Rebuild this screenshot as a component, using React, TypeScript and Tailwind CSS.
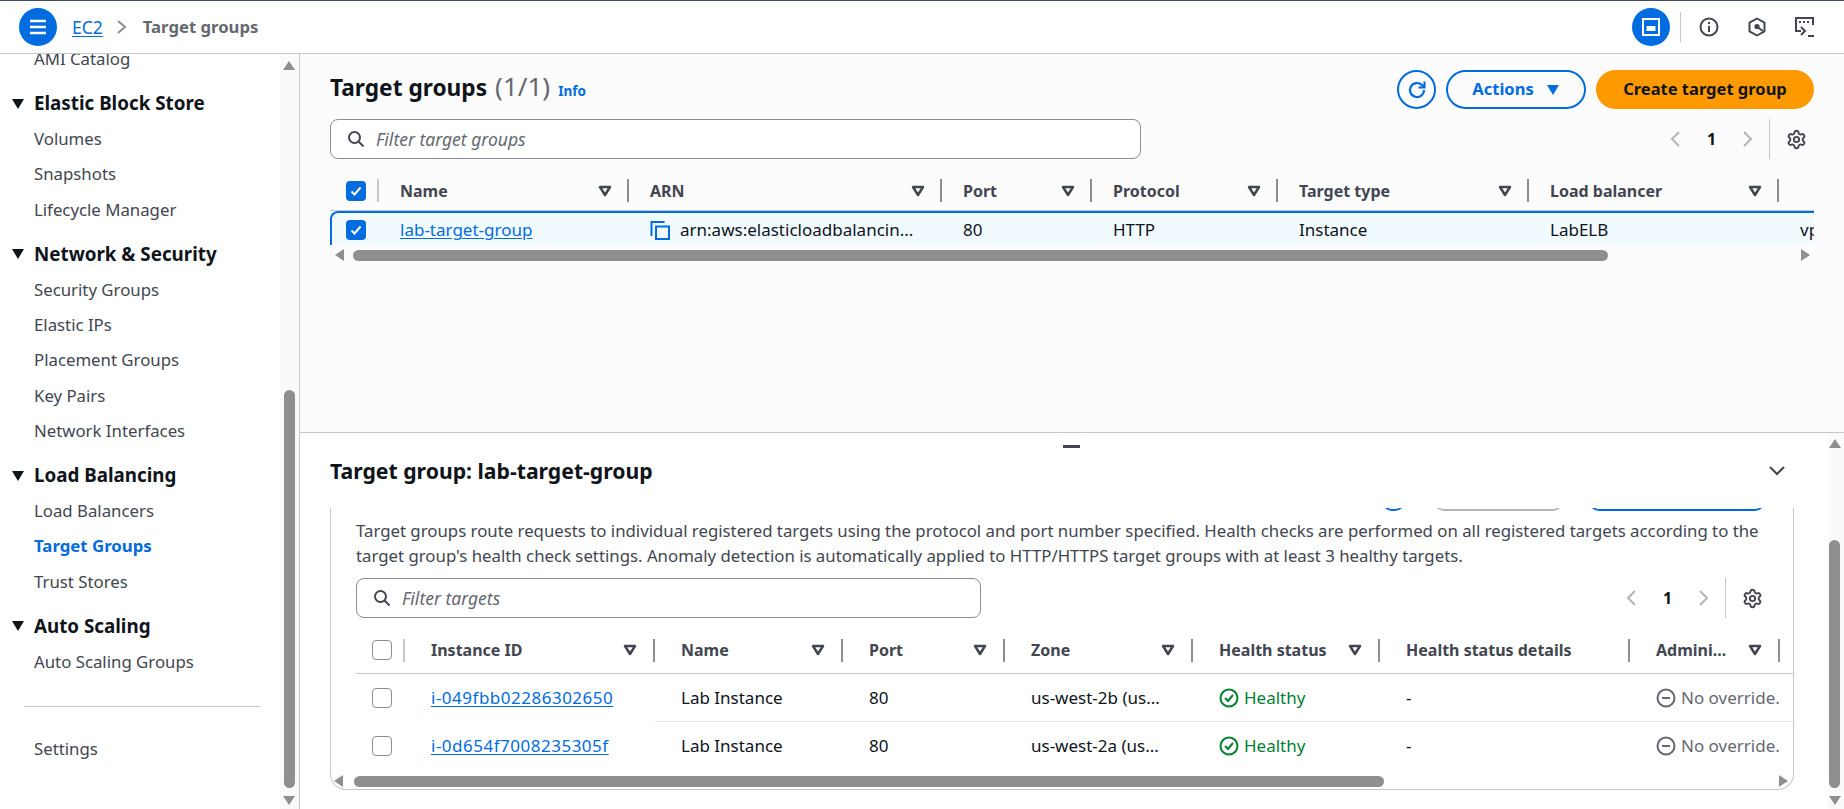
import { Settings } from 'lucide-react';

const font = "font-['Noto_Sans',sans-serif]";

const sections = [
  { title: 'Elastic Block Store', items: ['Volumes', 'Snapshots', 'Lifecycle Manager'] },
  { title: 'Network & Security', items: ['Security Groups', 'Elastic IPs', 'Placement Groups', 'Key Pairs', 'Network Interfaces'] },
  { title: 'Load Balancing', items: ['Load Balancers', 'Target Groups', 'Trust Stores'] },
  { title: 'Auto Scaling', items: ['Auto Scaling Groups'] },
];

const topColumns = [
  { label: 'Name', width: 'w-[250px]' },
  { label: 'ARN', width: 'w-[313px]' },
  { label: 'Port', width: 'w-[150px]' },
  { label: 'Protocol', width: 'w-[186px]' },
  { label: 'Target type', width: 'w-[251px]' },
  { label: 'Load balancer', width: 'w-[250px]' },
];

const targetColumns = [
  { label: 'Instance ID', width: 'w-[250px]', sort: true },
  { label: 'Name', width: 'w-[188px]', sort: true },
  { label: 'Port', width: 'w-[162px]', sort: true },
  { label: 'Zone', width: 'w-[188px]', sort: true },
  { label: 'Health status', width: 'w-[187px]', sort: true },
  { label: 'Health status details', width: 'w-[250px]', sort: false },
  { label: 'Admini...', width: 'w-[150px]', sort: true },
];

const targets = [
  { id: 'i-049fbb02286302650', zone: 'us-west-2b (us...' },
  { id: 'i-0d654f7008235305f', zone: 'us-west-2a (us...' },
];

function SortIcon() {
  return (
    <svg width="14" height="14" viewBox="0 0 14 14" className="shrink-0 text-[#424650]">
      <path d="M2 3h10L7 11z" fill="none" stroke="currentColor" strokeWidth="2.5" strokeLinejoin="round" />
    </svg>
  );
}

function Arrow({ dir, className }: { dir: 'up' | 'down' | 'left' | 'right'; className?: string }) {
  const d = { up: 'M6 1l6 9H0z', down: 'M0 2h12l-6 9z', left: 'M10 0v12L1 6z', right: 'M2 0v12l9-6z' }[dir];
  return (
    <svg width="12" height="12" viewBox="0 0 12 12" className={`shrink-0 ${className ?? ''}`}>
      <path d={d} fill="#8f8f8f" />
    </svg>
  );
}

function Checkbox({ checked }: { checked?: boolean }) {
  return checked ? (
    <span className="flex h-5 w-5 items-center justify-center rounded-[4px] bg-[#006ce0]">
      <svg width="14" height="14" viewBox="0 0 14 14">
        <path d="M2.5 7.5l3 3 6-7" fill="none" stroke="white" strokeWidth="2" />
      </svg>
    </span>
  ) : (
    <span className="block h-5 w-5 rounded-[4px] border border-[#8c8c94] bg-white" />
  );
}

function SearchIcon() {
  return (
    <svg width="18" height="18" viewBox="0 0 18 18" className="shrink-0 text-[#424650]">
      <circle cx="7.5" cy="7.5" r="5.5" fill="none" stroke="currentColor" strokeWidth="2" />
      <path d="M11.5 11.5l5 5" stroke="currentColor" strokeWidth="2" />
    </svg>
  );
}

function FilterInput({ placeholder, width }: { placeholder: string; width: string }) {
  return (
    <div className={`flex h-10 items-center gap-[11px] rounded-lg border border-[#8c8c94] bg-white pl-4 ${width}`}>
      <SearchIcon />
      <span className="text-[17.5px] italic text-[#656871]">{placeholder}</span>
    </div>
  );
}

function Pagination() {
  return (
    <div className="flex h-10 items-center">
      <svg width="14" height="18" viewBox="0 0 14 18"><path d="M10 2L3 9l7 7" fill="none" stroke="#b4b4bb" strokeWidth="2" /></svg>
      <span className="w-[57px] text-center text-base font-bold text-[#0f141a]">1</span>
      <svg width="14" height="18" viewBox="0 0 14 18"><path d="M4 2l7 7-7 7" fill="none" stroke="#b4b4bb" strokeWidth="2" /></svg>
      <span className="ml-[15px] h-10 w-px bg-[#c6c6cd]" />
      <Settings size={21} strokeWidth={2.2} className="ml-[16px] text-[#424650]" />
    </div>
  );
}

export default function App() {
  return (
    <div className={`${font} flex h-[809px] w-[1844px] flex-col overflow-hidden border-t border-[#414d5c] bg-white text-[17px] text-[#0f141a]`}>
      {/* Top bar */}
      <header className="flex h-[53px] shrink-0 items-center border-b border-[#c6c6cd] pl-[19px] pr-[30px]">
        <span className="flex h-[38px] w-[38px] items-center justify-center rounded-full bg-[#006ce0]">
          <svg width="20" height="18" viewBox="0 0 20 18">
            <path d="M2 3h16M2 9h16M2 15h16" stroke="white" strokeWidth="2.4" />
          </svg>
        </span>
        <span className="ml-[15px] text-[17.5px] text-[#006ce0] underline underline-offset-2">EC2</span>
        <svg width="14" height="18" viewBox="0 0 14 18" className="ml-[12px]"><path d="M3 3l7 6-7 6" fill="none" stroke="#8c8c94" strokeWidth="2" /></svg>
        <span className="ml-[14px] text-[16.7px] font-bold text-[#656871]">Target groups</span>

        <div className="ml-auto flex items-center">
          <span className="flex h-[38px] w-[38px] items-center justify-center rounded-full bg-[#006ce0]">
            <svg width="20" height="20" viewBox="0 0 20 20">
              <rect x="2" y="2" width="16" height="16" fill="none" stroke="white" strokeWidth="2" />
              <rect x="5.5" y="9" width="9" height="5" fill="white" />
            </svg>
          </span>
          <span className="ml-[10px] h-[30px] w-px bg-[#c6c6cd]" />
          <svg width="20" height="20" viewBox="0 0 20 20" className="ml-[18px] text-[#424650]">
            <circle cx="10" cy="10" r="8.5" fill="none" stroke="currentColor" strokeWidth="2" />
            <path d="M10 9v6" stroke="currentColor" strokeWidth="2" />
            <circle cx="10" cy="6" r="1.2" fill="currentColor" />
          </svg>
          <svg width="20" height="20" viewBox="0 0 20 20" className="ml-[28px] text-[#424650]">
            <path d="M10 1.5l7.5 4.2v8.6L10 18.5l-7.5-4.2V5.7z" fill="none" stroke="currentColor" strokeWidth="2" strokeLinejoin="round" />
            <circle cx="10" cy="9.5" r="2.6" fill="currentColor" />
            <path d="M11 10.5l5 3.5" stroke="currentColor" strokeWidth="2" />
          </svg>
          <div className="ml-[27px] w-[20px] overflow-hidden">
            <svg width="22" height="22" viewBox="0 0 22 22" className="text-[#424650]">
              <path d="M7 15H2V2h17v7" fill="none" stroke="currentColor" strokeWidth="2" />
              <path d="M5 6h2M9 6h2M13 6h2" stroke="currentColor" strokeWidth="2" />
              <path d="M7 11l4 4-4 4" fill="none" stroke="currentColor" strokeWidth="2" />
              <path d="M14 20h8" stroke="currentColor" strokeWidth="2" />
            </svg>
          </div>
        </div>
      </header>

      <div className="flex min-h-0 flex-1">
        {/* Side navigation */}
        <aside className="flex w-[300px] shrink-0 border-r border-[#c6c6cd]">
          <nav className="min-w-0 flex-1 overflow-hidden">
            <div className="-mt-[13px] pl-[34px] pr-[20px] text-[16.8px] text-[#424650]">
              <div className="flex h-[35px] items-center">AMI Catalog</div>
              {sections.map((s) => (
                <div key={s.title} className="mt-[10px]">
                  <div className="-ml-[22px] flex h-[35px] items-center gap-[10px] text-[18.8px] font-bold text-[#0f141a]">
                    <svg width="12" height="10" viewBox="0 0 12 10" className="shrink-0"><path d="M0 0h12L6 10z" fill="#0f141a" /></svg>
                    {s.title}
                  </div>
                  {s.items.map((item) => (
                    <div key={item} className={`flex h-[35.25px] items-center ${item === 'Target Groups' ? 'font-bold text-[#006ce0]' : ''}`}>
                      {item}
                    </div>
                  ))}
                </div>
              ))}
              <div className="-ml-[10px] mt-[27px] h-px w-[236px] bg-[#c6c6cd]" />
              <div className="mt-[24px] flex h-[35px] items-center">Settings</div>
            </div>
          </nav>
          <div className="flex w-[19px] shrink-0 flex-col items-center bg-[#fafafa] pr-[1px] pt-[6px]">
            <Arrow dir="up" />
            <div className="mt-[318px] h-[398px] w-[11px] rounded-full bg-[#8f8f8f]" />
            <Arrow dir="down" className="mt-[6px]" />
          </div>
        </aside>

        <main className="flex min-w-0 flex-1 flex-col">
          {/* Target groups list */}
          <section className="h-[379px] shrink-0 border-b border-[#c6c6cd] bg-[#fcfcfc] px-[30px]">
            <div className="flex h-[55px] items-end justify-between">
              <div className="flex items-baseline pb-[4px]">
                <h1 className="text-[22.7px] font-bold text-[#0f141a]">Target groups</h1>
                <span className="ml-[8px] text-[26px] leading-none text-[#656871]">(1/1)</span>
                <span className="ml-[8px] text-[13.5px] font-bold text-[#006ce0]">Info</span>
              </div>
              <div className="flex items-center">
                <span className="flex h-[39px] w-[39px] items-center justify-center rounded-full border-2 border-[#006ce0]">
                  <svg width="22" height="22" viewBox="0 0 22 22">
                    <path d="M18 11a7 7 0 1 1-2.2-5.1L18 8" fill="none" stroke="#006ce0" strokeWidth="2.2" />
                    <path d="M18.5 2.5V8.5H12.5" fill="none" stroke="#006ce0" strokeWidth="2.2" />
                  </svg>
                </span>
                <span className="ml-[10px] flex h-[39px] w-[140px] items-center justify-center gap-[12px] rounded-full border-2 border-[#006ce0] text-[16.5px] font-bold text-[#006ce0]">
                  Actions
                  <svg width="14" height="12" viewBox="0 0 14 12"><path d="M1 1h12L7 11z" fill="#006ce0" /></svg>
                </span>
                <span className="ml-[10px] flex h-[39px] w-[218px] items-center justify-center rounded-full bg-[#ff9900] text-[16.5px] font-bold text-[#0f141a]">
                  Create target group
                </span>
              </div>
            </div>

            <div className="mt-[10px] flex items-center justify-between pr-[7px]">
              <FilterInput placeholder="Filter target groups" width="w-[811px]" />
              <Pagination />
            </div>

            {/* Table */}
            <div className="mt-[12px] overflow-hidden">
              <div className="flex h-[40px] w-[1600px] items-center border-b border-[#c6c6cd] text-base">
                <div className="flex w-[49px] shrink-0 items-center justify-between pl-[16px]">
                  <Checkbox checked />
                  <span className="h-[23px] w-[2px] bg-[#c6c6cd]" />
                </div>
                {topColumns.map((c) => (
                  <div key={c.label} className={`flex h-[23px] shrink-0 items-center justify-between border-r-2 border-[#8c8c94] pl-[21px] pr-[15px] ${c.width}`}>
                    <span className="font-bold text-[#424650]">{c.label}</span>
                    <SortIcon />
                  </div>
                ))}
              </div>
              <div className="flex h-[34px] w-[1600px] items-center rounded-tl-lg border-t-2 border-l-2 border-[#006ce0] bg-[#f1faff] pt-[2px]">
                <div className="w-[47px] shrink-0 pl-[14px]">
                  <Checkbox checked />
                </div>
                <div className="w-[250px] shrink-0 pl-[21px] text-[#006ce0] underline underline-offset-2">lab-target-group</div>
                <div className="flex w-[313px] shrink-0 items-center gap-[10px] pl-[21px]">
                  <svg width="20" height="20" viewBox="0 0 20 20" className="shrink-0">
                    <path d="M1.5 16V2h13" fill="none" stroke="#006ce0" strokeWidth="2" />
                    <rect x="6" y="6.5" width="13" height="12.5" fill="none" stroke="#006ce0" strokeWidth="2" />
                  </svg>
                  <span className="whitespace-nowrap">arn:aws:elasticloadbalancin...</span>
                </div>
                <div className="w-[150px] shrink-0 pl-[21px]">80</div>
                <div className="w-[186px] shrink-0 pl-[21px]">HTTP</div>
                <div className="w-[251px] shrink-0 pl-[21px]">Instance</div>
                <div className="w-[250px] shrink-0 pl-[21px]">LabELB</div>
                <div className="shrink-0 pl-[21px]">vpc</div>
              </div>
              <div className="mt-[4px] flex h-[12px] items-center pl-[4px]">
                <Arrow dir="left" />
                <div className="ml-[7px] h-[11px] w-[1255px] rounded-full bg-[#8f8f8f]" />
                <Arrow dir="right" className="ml-[191px]" />
              </div>
            </div>
          </section>

          {/* Split panel */}
          <section className="flex min-h-0 flex-1">
            <div className="min-w-0 flex-1 pl-[30px] pr-[34px]">
              <div className="ml-[733px] mt-[12px] h-[3px] w-[17px] bg-[#424650]" />
              <div className="mt-[8px] flex h-[30px] items-center justify-between pr-[8px]">
                <h2 className="text-[21.2px] font-bold text-[#0f141a]">Target group: lab-target-group</h2>
                <svg width="18" height="12" viewBox="0 0 18 12"><path d="M2 2l7 7 7-7" fill="none" stroke="#424650" strokeWidth="2" /></svg>
              </div>

              <div className="mt-[22px] h-[282px] overflow-hidden rounded-b-2xl border-x border-b border-[#c6c6cd] bg-white">
                {/* Buttons scrolled out of the container */}
                <div className="flex h-[3px] items-end">
                  <span className="ml-[1051px] h-[20px] w-[23px] shrink-0 rounded-full border-2 border-[#006ce0]" />
                  <span className="ml-[29px] h-[20px] w-[129px] shrink-0 rounded-full border-2 border-[#b4b4bb]" />
                  <span className="ml-[26px] h-[20px] w-[176px] shrink-0 rounded-full border-2 border-[#006ce0]" />
                </div>
                <p className="mt-[7px] pl-[25px] pr-[20px] text-[16.8px] leading-[25px] text-[#424650]">
                  Target groups route requests to individual registered targets using the protocol and port number specified. Health checks are performed on all registered targets according to the<br />
                  target group's health check settings. Anomaly detection is automatically applied to HTTP/HTTPS target groups with at least 3 healthy targets.
                </p>
                <div className="mt-[10px] flex items-center justify-between pl-[25px] pr-[30px]">
                  <FilterInput placeholder="Filter targets" width="w-[625px]" />
                  <Pagination />
                </div>

                <div className="ml-[25px] mt-[9px]">
                  <div className="flex h-[47px] items-center border-b border-[#c6c6cd] text-base">
                    <div className="flex w-[49px] shrink-0 items-center justify-between pl-[16px]">
                      <Checkbox />
                      <span className="h-[23px] w-[2px] bg-[#c6c6cd]" />
                    </div>
                    {targetColumns.map((c) => (
                      <div key={c.label} className={`flex h-[23px] shrink-0 items-center justify-between border-r-2 border-[#8c8c94] pl-[26px] pr-[16px] ${c.width}`}>
                        <span className="whitespace-nowrap font-bold text-[#424650]">{c.label}</span>
                        {c.sort && <SortIcon />}
                      </div>
                    ))}
                  </div>
                  {targets.map((t, i) => (
                    <div key={t.id} className="flex h-[48px] items-center">
                      <div className="w-[49px] shrink-0 pl-[16px]">
                        <Checkbox />
                      </div>
                      <div className="w-[250px] shrink-0 pl-[26px] tracking-[0.5px] text-[#006ce0] underline underline-offset-2">{t.id}</div>
                      <div className={`flex h-full min-w-0 flex-1 items-center ${i === 0 ? 'border-b border-[#e8e8ec]' : ''}`}>
                        <div className="w-[188px] shrink-0 pl-[26px]">Lab Instance</div>
                        <div className="w-[162px] shrink-0 pl-[26px]">80</div>
                        <div className="w-[188px] shrink-0 whitespace-nowrap pl-[26px]">{t.zone}</div>
                        <div className="flex w-[187px] shrink-0 items-center gap-[5px] pl-[26px] text-[#00802f]">
                          <svg width="20" height="20" viewBox="0 0 20 20" className="shrink-0">
                            <circle cx="10" cy="10" r="8.5" fill="none" stroke="#00802f" strokeWidth="2" />
                            <path d="M6 10l3 3 5-6" fill="none" stroke="#00802f" strokeWidth="2" />
                          </svg>
                          Healthy
                        </div>
                        <div className="w-[250px] shrink-0 pl-[26px]">-</div>
                        <div className="flex shrink-0 items-center gap-[5px] whitespace-nowrap pl-[26px] text-[#656871]">
                          <svg width="20" height="20" viewBox="0 0 20 20" className="shrink-0">
                            <circle cx="10" cy="10" r="8.5" fill="none" stroke="#656871" strokeWidth="2" />
                            <path d="M6 10h8" stroke="#656871" strokeWidth="2" />
                          </svg>
                          No override.
                        </div>
                      </div>
                    </div>
                  ))}
                </div>
                <div className="mt-[5px] flex h-[12px] items-center pl-[1px]">
                  <Arrow dir="left" className="ml-[1px]" />
                  <div className="ml-[9px] h-[11px] w-[1030px] rounded-full bg-[#8f8f8f]" />
                  <Arrow dir="right" className="ml-[393px]" />
                </div>
              </div>
            </div>
            <div className="flex w-[16px] shrink-0 flex-col items-center bg-[#fafafa] pr-[3px] pt-[5px]">
              <Arrow dir="up" />
              <div className="mt-[90px] h-[248px] w-[11px] rounded-full bg-[#8f8f8f]" />
              <Arrow dir="down" className="mt-[6px]" />
            </div>
          </section>
        </main>
      </div>
    </div>
  );
}
